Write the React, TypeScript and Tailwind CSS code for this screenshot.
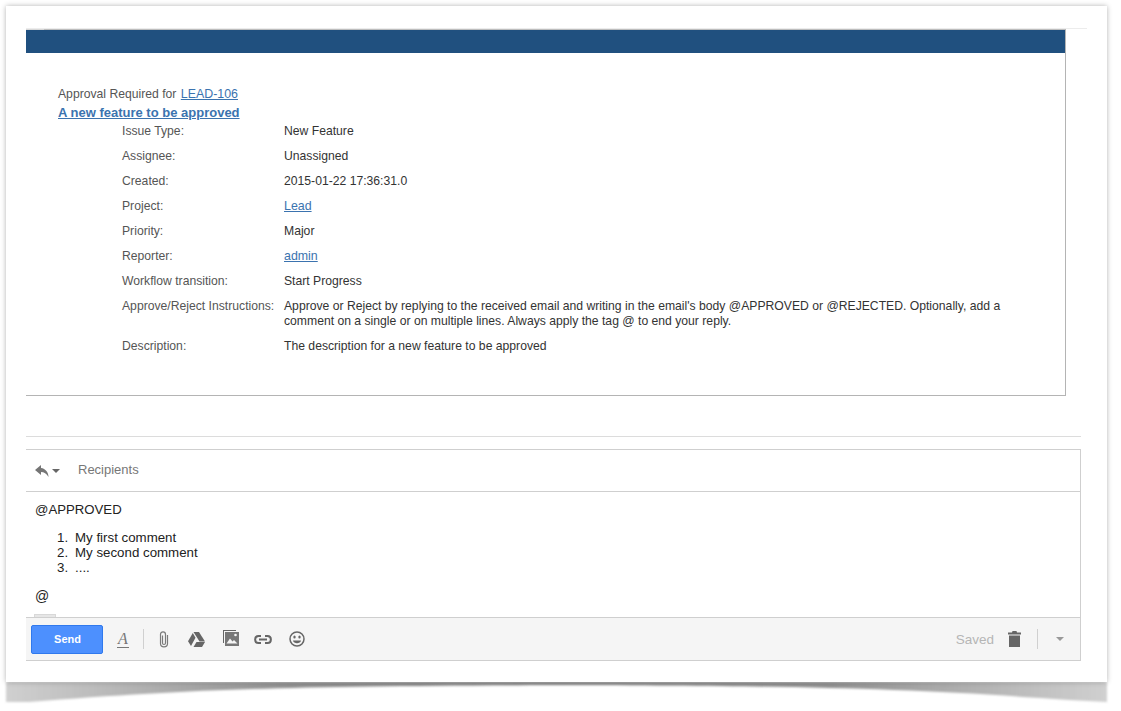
import React from 'react';

const rows = [
  { label: 'Issue Type:', value: 'New Feature' },
  { label: 'Assignee:', value: 'Unassigned' },
  { label: 'Created:', value: '2015-01-22 17:36:31.0' },
  { label: 'Project:', value: 'Lead', link: true },
  { label: 'Priority:', value: 'Major' },
  { label: 'Reporter:', value: 'admin', link: true },
  { label: 'Workflow transition:', value: 'Start Progress' },
];

const ReplyIcon = () => (
  <svg width="14" height="12" viewBox="0 0 14 12" fill="#757575">
    <path d="M6 0 L0 5 L6 10 V7 C9 7 11.500 8.500 13.500 12 C13.500 7.500 10.500 3.500 6 3 Z" />
  </svg>
);

const Caret = ({ color }: { color: string }) => (
  <svg width="8" height="4" viewBox="0 0 8 4" fill={color}>
    <path d="M0 0 H8 L4 4 Z" />
  </svg>
);

const ClipIcon = () => (
  <svg width="12" height="17" viewBox="0 0 12 17" fill="none" stroke="#7a7a7a" strokeWidth="1.200">
    <path d="M9.500 4 V12.500 C9.500 17 2.500 17 2.500 12.500 V3.500 C2.500 0 7.500 0 7.500 3.500 V12 C7.500 14 4.500 14 4.500 12 V4.500" />
  </svg>
);

const DriveIcon = () => (
  <svg width="17" height="15" viewBox="0 0 17 15" fill="#666666">
    <path d="M5.500 0 H11 L17 9.500 H11.500 Z" />
    <path d="M4.800 1 L7.500 5.800 L3 14 L0 9.300 Z" />
    <path d="M8.500 10 H17 L14 15 H5.500 Z" />
  </svg>
);

const PhotoIcon = () => (
  <svg width="16" height="16" viewBox="0 0 16 16">
    <path d="M0 0 H13 V1 H1 V13 H0 Z" fill="#666666" />
    <path d="M2 2 H16 V16 H2 Z" fill="#777777" />
    <path d="M3.500 13.500 L7 8.500 L9.500 11.500 L11 10 L14.500 13.500 Z" fill="#f5f5f5" />
    <circle cx="12.500" cy="5" r="1.300" fill="#f5f5f5" />
  </svg>
);

const LinkIcon = () => (
  <svg width="18" height="9" viewBox="0 0 18 9" fill="none" stroke="#666666" strokeWidth="2">
    <path d="M7 1 H4.500 C0 1 0 8 4.500 8 H7" />
    <path d="M11 1 H13.500 C18 1 18 8 13.500 8 H11" />
    <path d="M5 4.500 H13" />
  </svg>
);

const SmileIcon = () => (
  <svg width="16" height="16" viewBox="0 0 16 16">
    <circle cx="8" cy="8" r="7" fill="none" stroke="#666666" strokeWidth="1.500" />
    <ellipse cx="5.500" cy="6" rx="1.200" ry="1.500" fill="#666666" />
    <ellipse cx="10.500" cy="6" rx="1.200" ry="1.500" fill="#666666" />
    <path d="M4 9.500 H12 C11.500 13 4.500 13 4 9.500 Z" fill="#666666" />
  </svg>
);

const TrashIcon = () => (
  <svg width="13" height="16" viewBox="0 0 13 16" fill="#666666">
    <path d="M4.500 0 H8.500 L9 1.500 H13 V3.500 H0 V1.500 H4 Z" />
    <path d="M1 4.500 H12 V16 H1 Z" />
  </svg>
);

const BottomShadow = () => (
  <svg className="absolute left-[4px] top-[680px]" width="1106" height="26" viewBox="0 0 1106 26">
    <defs>
      <linearGradient id="fade" x1="0" y1="0" x2="1" y2="0">
        <stop offset="0" stopColor="#d0d0d0" />
        <stop offset="0.25" stopColor="#929292" />
        <stop offset="0.5" stopColor="#808080" />
        <stop offset="0.75" stopColor="#929292" />
        <stop offset="1" stopColor="#d0d0d0" />
      </linearGradient>
      <filter id="soft">
        <feGaussianBlur stdDeviation="0.800" />
      </filter>
    </defs>
    <path d="M2 2 H1103 V22 L1065 20 C900 8 800 6 553 5 C300 6 200 8 25 22 L2 22 Z" fill="url(#fade)" filter="url(#soft)" />
  </svg>
);

export default function App() {
  return (
    <div className="relative w-[1121px] h-[711px] overflow-hidden bg-white text-[12.18px] font-['Liberation_Sans',Arial,sans-serif]">
      <BottomShadow />
      <div className="relative ml-[6px] pt-[6px] w-[1101px]">
        <div className="h-[676px] bg-white pl-[20px] pt-[22px] shadow-[0_0_5px_rgba(0,0,0,0.3)]">
          {/* email body */}
          <div className="w-[1061px] border-t border-[#ececec]">
            <div className="relative w-[1040px] h-[367px] border-t border-r border-b border-t-[#bdbdbd] border-r-[#b4b4b4] border-b-[#b4b4b4]">
              <div className="absolute left-0 top-[-1px] w-[18px] h-px bg-[#d8d8d8]" />
              <div className="h-[23px] bg-[#20507f]" />
              <div className="pl-[32px] pt-[32px]">
                <div className="h-[18px] leading-[18px] text-[#555555]">
                  Approval Required for <a className="ml-[1px] text-[12.4px] text-[#3b73af] underline">LEAD-106</a>
                </div>
                <div className="h-[19px] leading-[20px] text-[13px] font-bold text-[#3b73af] underline">
                  A new feature to be approved
                </div>
                <div className="pl-[64px]">
                  {rows.map((r) => (
                    <div key={r.label} className="flex h-[25px] leading-[19px]">
                      <div className="w-[162px] text-[#555555]">{r.label}</div>
                      {r.link ? (
                        <a className="text-[12.4px] text-[#3b73af] underline">{r.value}</a>
                      ) : (
                        <div className="text-[#333333]">{r.value}</div>
                      )}
                    </div>
                  ))}
                  <div className="flex h-[42px] leading-[15px] pt-[2px]">
                    <div className="w-[162px] text-[#555555]">Approve/Reject Instructions:</div>
                    <div className="w-[730px] text-[#333333]">
                      Approve or Reject by replying to the received email and writing in the email's body @APPROVED or @REJECTED. Optionally, add a comment on a single or on multiple lines. Always apply the tag @ to end your reply.
                    </div>
                  </div>
                  <div className="flex leading-[15px]">
                    <div className="w-[162px] text-[#555555]">Description:</div>
                    <div className="text-[#333333]">The description for a new feature to be approved</div>
                  </div>
                </div>
              </div>
            </div>
          </div>

          <div className="mt-[40px] w-[1055px] border-t border-[#dcdcdc]" />

          {/* compose box */}
          <div className="mt-[12px] w-[1055px] h-[212px] border border-l-0 border-[#cfcfcf] flex flex-col">
            <div className="h-[42px] shrink-0 flex items-center border-b border-[#cfcfcf] pl-[9px] text-[#777777]">
              <ReplyIcon />
              <span className="ml-[3px]"><Caret color="#666666" /></span>
              <span className="ml-[18px] text-[13px] leading-[13px] mb-[2px]">Recipients</span>
            </div>
            <div className="relative flex-1 pl-[9px] pt-[9px] text-[13px] leading-[17px] text-[#222222]">
              <div className="text-[13.2px]">@APPROVED</div>
              <ol className="mt-[12px] pl-[22px] text-[13.3px] leading-[15px]">
                <li className="flex"><span className="w-[18px]">1.</span>My first comment</li>
                <li className="flex"><span className="w-[18px]">2.</span>My second comment</li>
                <li className="flex"><span className="w-[18px]">3.</span>....</li>
              </ol>
              <div className="mt-[13px] text-[14px]">@</div>
              <div className="absolute left-[8px] bottom-0 w-[22px] h-[3px] bg-[#e6e6e6] border border-b-0 border-[#d8d8d8]" />
            </div>
            <div className="h-[43px] shrink-0 flex items-center border-t border-[#cfcfcf] bg-[#f5f5f5] pl-[5px] pr-[16px]">
              <button className="w-[72px] h-[29px] rounded-[2px] bg-[#4d90fe] border border-[#3079ed] pl-[1px] text-white text-[11px] font-bold">
                Send
              </button>
              <span className="ml-[14px] w-[12px] h-[17px] text-center font-['Liberation_Serif',serif] italic text-[16px] leading-[16px] text-[#777777] border-b border-[#777777]">A</span>
              <div className="ml-[14px] w-px h-[20px] bg-[#d0d0d0]" />
              <span className="ml-[14px] flex"><ClipIcon /></span>
              <span className="ml-[18px] flex"><DriveIcon /></span>
              <span className="ml-[18px] flex mb-[2px]"><PhotoIcon /></span>
              <span className="ml-[15px] flex"><LinkIcon /></span>
              <span className="ml-[17px] flex mb-[1px]"><SmileIcon /></span>
              <div className="flex-1" />
              <span className="mt-[3px] text-[13.5px] text-[#b5b5b5]">Saved</span>
              <span className="ml-[14px] flex"><TrashIcon /></span>
              <div className="ml-[16px] w-px h-[20px] bg-[#d0d0d0]" />
              <span className="ml-[18px] flex"><Caret color="#999999" /></span>
            </div>
          </div>
        </div>
      </div>
    </div>
  );
}
